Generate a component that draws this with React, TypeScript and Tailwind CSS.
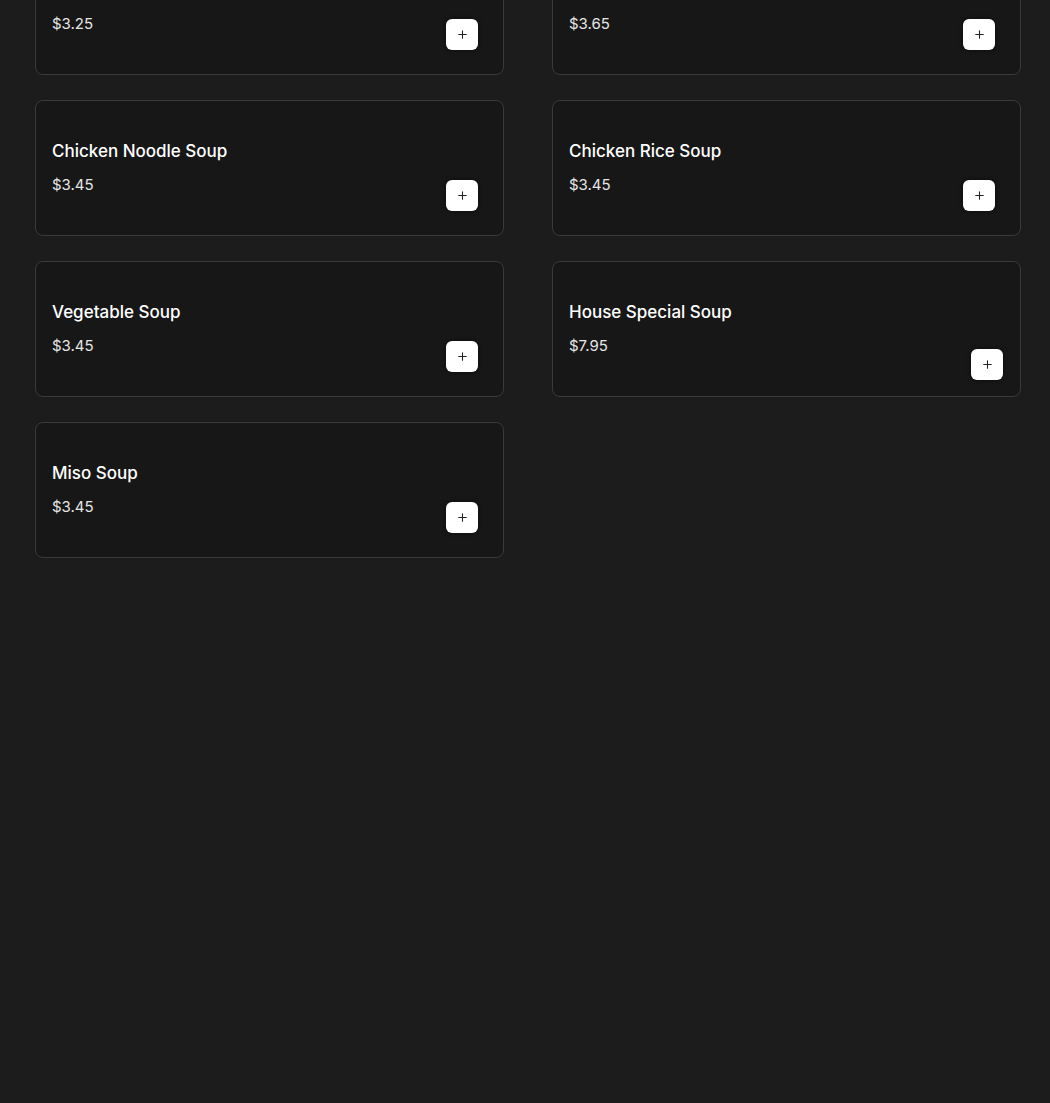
import React from 'react';
import { Plus } from 'lucide-react';

type Item = { name: string; price: string; compact?: boolean };

const items: Item[] = [
    { name: 'Wonton Egg Drop Mix Soup (Pint)', price: '$3.25' },
    { name: 'Hot & Sour Soup', price: '$3.65' },
    { name: 'Chicken Noodle Soup', price: '$3.45' },
    { name: 'Chicken Rice Soup', price: '$3.45' },
    { name: 'Vegetable Soup', price: '$3.45' },
    { name: 'House Special Soup', price: '$7.95', compact: true },
    { name: 'Miso Soup', price: '$3.45' },
];

const MenuCard: React.FC<{ item: Item }> = ({ item }) => (
    <div className="relative flex h-[136px] items-center rounded-lg border border-[#3a3a3a] bg-[#171717] px-4">
        <div>
            <h2 className="text-[17px] font-medium leading-6 text-white">{item.name}</h2>
            <p className="mt-[10px] text-[15px] leading-6 text-[#e6e6e6]">{item.price}</p>
        </div>
        <button
            className={
                item.compact
                    ? 'absolute bottom-4 right-[17px] flex h-[31px] w-8 items-center justify-center rounded-md bg-white text-[#222] shadow-[0_0_4px_rgba(0,0,0,0.6)]'
                    : 'absolute bottom-6 right-[25px] flex h-[31px] w-8 items-center justify-center rounded-md bg-white text-[#222] shadow-[0_0_4px_rgba(0,0,0,0.6)]'
            }
        >
            <Plus size={13} strokeWidth={2} />
        </button>
    </div>
);

const App: React.FC = () => {
    return (
        <div
            className="h-[1103px] overflow-hidden bg-[#1c1c1c]"
            style={{ fontFamily: 'Inter, "Noto Sans", sans-serif' }}
        >
            {/* page is shown scrolled: first row sits partly above the fold */}
            <div className="-mt-[61px] grid grid-cols-2 gap-x-12 gap-y-[25px] pl-[35px] pr-[29px]">
                {items.map((item) => (
                    <MenuCard key={item.name} item={item} />
                ))}
            </div>
        </div>
    );
};

export default App;
